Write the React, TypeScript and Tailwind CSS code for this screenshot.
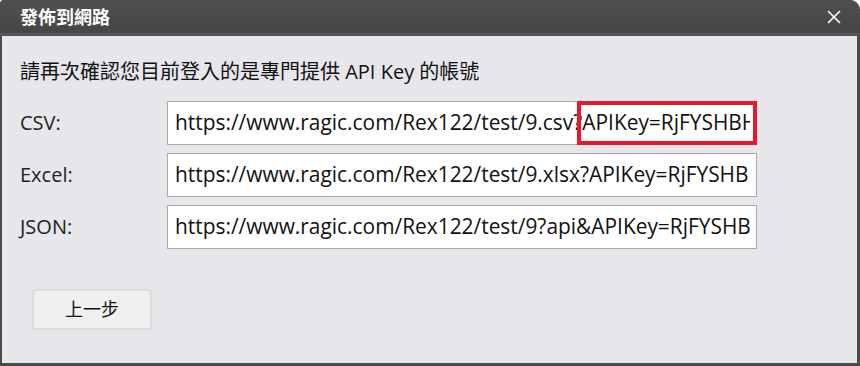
import React from 'react';

const rows = [
  { label: 'CSV:', text: 'https://www.ragic.com/Rex122/test/9.csv?APIKey=RjFYSHBHk2Lm', mark: true },
  { label: 'Excel:', text: 'https://www.ragic.com/Rex122/test/9.xlsx?APIKey=RjFYSHBHk2Lm', mark: false },
  { label: 'JSON:', text: 'https://www.ragic.com/Rex122/test/9?api&APIKey=RjFYSHBHk2Lm', mark: false },
];

const font = { fontFamily: '"Open Sans", "Noto Sans CJK TC", sans-serif' };

export default function App() {
  return (
    <div className="w-[860px] h-[366px] bg-white" style={font}>
      <div className="flex flex-col h-full rounded-tr-[10px] rounded-tl-[4px] bg-[#4b4b4b] overflow-hidden">
        <div className="h-[36px] shrink-0 flex items-center justify-between pl-[20px] pr-[18px] bg-gradient-to-b from-[#4f4f4f] to-[#464646] border-b-[3px] border-[#555]">
          <span className="text-white font-bold text-[18px] leading-none">發佈到網路</span>
          <svg width="16" height="16" viewBox="0 0 16 16" className="text-white">
            <path d="M2 2 L14 14 M14 2 L2 14" stroke="currentColor" strokeWidth="1.6" fill="none" />
          </svg>
        </div>
        <div className="flex-1 ml-[2px] mr-[3px] mb-[3px] bg-[#e7e6eb] pl-[18px] pt-[22px]">
          <div className="text-[20px] leading-[28px] text-[#111]">請再次確認您目前登入的是專門提供 API Key 的帳號</div>
          <div className="mt-[15px] flex flex-col gap-[8px]">
            {rows.map((r) => (
              <div key={r.label} className="flex items-center">
                <div className="w-[147px] text-[20px] text-[#222]">{r.label}</div>
                <div className="relative w-[590px] h-[44px] bg-white border border-[#aaa] flex items-center pl-[7px] pr-[6px] text-[20.9px] text-[#111]">
                  <div className="flex-1 overflow-hidden whitespace-nowrap">{r.text}</div>
                  {r.mark && (
                    <div className="absolute top-[-1px] right-[-1px] w-[180px] h-[44px] border-[4px] border-[#e8192c]" />
                  )}
                </div>
              </div>
            ))}
          </div>
          <button className="mt-[40px] ml-[12px] w-[120px] h-[41px] bg-[#f0f0f0] border-2 border-[#dcdcdc] rounded-[4px] text-[18px] text-[#111]">
            上一步
          </button>
        </div>
      </div>
    </div>
  );
}
